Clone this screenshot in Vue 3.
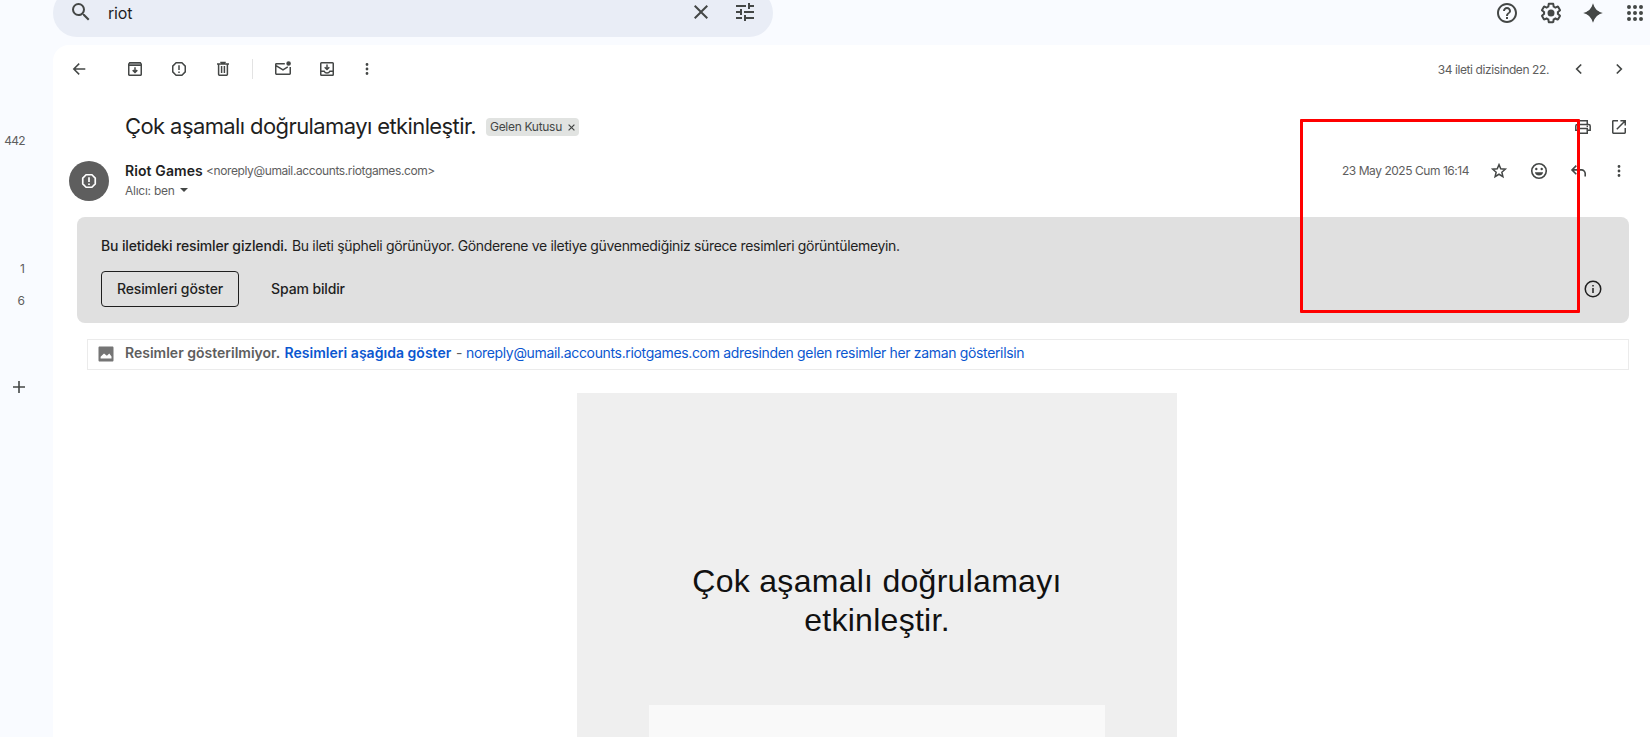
<script setup>
import { h } from 'vue'

const glyphs = {
  search: { f: 'M15.5 14h-.79l-.28-.27A6.47 6.47 0 0 0 16 9.5 6.5 6.5 0 1 0 9.5 16c1.61 0 3.09-.59 4.23-1.57l.27.28v.79l5 4.99L20.49 19zm-6 0C7.01 14 5 11.99 5 9.5S7.01 5 9.5 5 14 7.01 14 9.5 11.99 14 9.5 14z' },
  clear: { f: 'M19 6.41 17.59 5 12 10.59 6.41 5 5 6.41 10.59 12 5 17.59 6.41 19 12 13.41 17.59 19 19 17.59 13.41 12z' },
  tune: { f: 'M3 17v2h6v-2H3zM3 5v2h10V5H3zm10 16v-2h8v-2h-8v-2h-2v6h2zM7 9v2H3v2h4v2h2V9H7zm14 4v-2H11v2h10zm-6-4h2V7h4V5h-4V3h-2v6z' },
  help: { f: 'M11 18h2v-2h-2v2zm1-16C6.48 2 2 6.48 2 12s4.48 10 10 10 10-4.48 10-10S17.52 2 12 2zm0 18c-4.41 0-8-3.59-8-8s3.59-8 8-8 8 3.59 8 8-3.59 8-8 8zm0-14c-2.21 0-4 1.79-4 4h2c0-1.1.9-2 2-2s2 .9 2 2c0 2-3 1.75-3 5h2c0-2.25 3-2.5 3-5 0-2.21-1.79-4-4-4z' },
  gear: { f: 'M13.85 22.25h-3.7c-.74 0-1.36-.54-1.45-1.27l-.27-1.89c-.27-.14-.53-.29-.79-.46l-1.8.72c-.7.26-1.47-.03-1.81-.65L2.2 15.53c-.35-.66-.2-1.44.36-1.88l1.53-1.19c-.01-.15-.02-.3-.02-.46 0-.15.01-.31.02-.46l-1.52-1.19c-.59-.45-.74-1.26-.37-1.88l1.85-3.19c.34-.62 1.11-.9 1.79-.63l1.81.73c.26-.17.52-.32.78-.46l.27-1.91c.09-.7.71-1.25 1.44-1.25h3.7c.74 0 1.36.54 1.45 1.27l.27 1.89c.27.14.53.29.79.46l1.8-.72c.71-.26 1.48.03 1.82.65l1.84 3.18c.36.66.2 1.44-.36 1.88l-1.52 1.19c.01.15.02.3.02.46s-.01.31-.02.46l1.52 1.19c.56.45.72 1.23.37 1.86l-1.86 3.22c-.34.62-1.11.9-1.8.63l-1.8-.72c-.26.17-.52.32-.78.46l-.27 1.91c-.1.68-.72 1.22-1.46 1.22zm-3.23-2h2.76l.37-2.55.53-.22c.44-.18.88-.44 1.34-.78l.45-.34 2.38.96 1.38-2.4-2.03-1.58.07-.56c.03-.26.06-.51.06-.78s-.03-.53-.06-.78l-.07-.56 2.03-1.58-1.39-2.4-2.39.96-.45-.35c-.42-.32-.87-.58-1.33-.77l-.52-.22-.37-2.55h-2.76l-.37 2.55-.53.21c-.44.19-.88.44-1.34.79l-.45.33-2.38-.95-1.39 2.39 2.03 1.58-.07.56a7 7 0 0 0-.06.79c0 .26.02.53.06.78l.07.56-2.03 1.58 1.38 2.4 2.39-.96.45.35c.43.33.86.58 1.33.77l.53.22.38 2.55zM12 8.5a3.5 3.5 0 1 1 0 7 3.5 3.5 0 0 1 0-7z' },
  spark: { f: 'M12 2.2Q13.9 10.1 21.8 12 13.9 13.9 12 21.8 10.1 13.9 2.2 12 10.1 10.1 12 2.2z', s: 'M12 5Q13.4 10.6 19 12 13.4 13.4 12 19 10.6 13.4 5 12 10.6 10.6 12 5z' },
  apps: { f: [6, 12, 18].flatMap(y => [6, 12, 18].map(x => `M${x - 2} ${y}a2 2 0 1 1 4 0a2 2 0 1 1-4 0z`)).join('') },
  back: { s: 'M16.3 10H5M10.2 4.6 4.8 10l5.4 5.4' },
  archive: { s: 'M3.75 5.2 4.7 3.75h10.6l.95 1.45v10.1a.9.9 0 0 1-.9.95H4.65a.9.9 0 0 1-.9-.95zM3.75 6.2h12.5M10 8.2v5M7.7 11.1l2.3 2.3 2.3-2.3', g: 'M4.5 4h11v2h-11z' },
  report: { s: 'M7.1 3.75h5.8l3.35 3.35v5.8l-3.35 3.35H7.1L3.75 12.9V7.1zM10 6.2v4.9M10 12.4v1.6' },
  trash: { s: 'M4 4.9h12M8 4V3.5h4V4M5.6 5v10.5a.8.8 0 0 0 .8.75h7.2a.8.8 0 0 0 .8-.75V5M8.6 7v7M11.4 7v7' },
  unread: { s: 'M11.8 4.75H3.4a.65.65 0 0 0-.65.65v9.2c0 .36.3.65.65.65h13.2c.36 0 .65-.3.65-.65V8M3 6.6l7 4.2 4.8-2.9', f: 'M13.3 4.5a2.3 2.3 0 1 1 4.6 0a2.3 2.3 0 1 1-4.6 0z' },
  move: { s: 'M4.5 3.75h11c.4 0 .75.35.75.75v11c0 .4-.35.75-.75.75h-11a.75.75 0 0 1-.75-.75v-11c0-.4.35-.75.75-.75zM3.75 12.25h3.4c.5 1.1 1.6 1.8 2.85 1.8s2.35-.7 2.85-1.8h3.4M10 5.6v4.6M7.7 8.2l2.3 2.3 2.3-2.3' },
  more: { f: [5.5, 10, 14.5].map(y => `M8.6 ${y}a1.4 1.4 0 1 1 2.8 0a1.4 1.4 0 1 1-2.8 0z`).join('') },
  prev: { s: 'M12.2 5.5 7.7 10l4.5 4.5' },
  next: { s: 'M7.8 5.5l4.5 4.5-4.5 4.5' },
  print: { s: 'M5.75 7V3.75h8.5V7M5.8 13.2h-3V9c0-.9.7-1.6 1.6-1.6h11.2c.9 0 1.6.7 1.6 1.6v4.2h-3M5.75 11.4h8.5v4.85h-8.5z', f: 'M13.6 8.6h1.4v1.4h-1.4z' },
  open: { s: 'M9 3.75H4.4a.65.65 0 0 0-.65.65v11.2c0 .36.3.65.65.65h11.2c.36 0 .65-.3.65-.65V11M11.4 3.75h4.85V8.6M16 4 7.8 12.2' },
  star: { s: 'M10 3.6l1.75 4.2 4.55.4-3.45 3 1.05 4.45L10 13.25 6.1 15.65l1.05-4.45-3.45-3 4.55-.4z' },
  smile: { s: 'M2.75 10a7.25 7.25 0 1 1 14.5 0a7.25 7.25 0 1 1-14.5 0z', f: 'M6.1 8a1.2 1.2 0 1 1 2.4 0a1.2 1.2 0 1 1-2.4 0zM11.5 8a1.2 1.2 0 1 1 2.4 0a1.2 1.2 0 1 1-2.4 0zM5.9 11.2h8.2a4.2 4.2 0 0 1-8.2 0z' },
  reply: { s: 'M7.3 4.6 3 8.9l4.3 4.3M3.4 8.9h9.1a3.7 3.7 0 0 1 3.7 3.7v3' },
  info: { s: 'M2.25 10a7.75 7.75 0 1 1 15.5 0a7.75 7.75 0 1 1-15.5 0zM10 9v5M10 6v1.6' },
  plus: { s: 'M10 4v12M4 10h12' },
  image: { f: 'M3.5 2.5h13c.5 0 1 .5 1 1v13c0 .5-.5 1-1 1h-13c-.5 0-1-.5-1-1v-13c0-.5.5-1 1-1zM4.6 14.6h10.9V12.4l-2.2-3-2.4 2.4L8 9.4 4.6 12.8z' },
}

// s: stroked outline, f: filled shape, g: translucent fill
const Glyph = (p) => {
  const g = glyphs[p.name]
  const size = p.size || 20
  return h('svg', { width: size, height: size, viewBox: `0 0 ${size} ${size}`, fill: 'currentColor' }, [
    g.g && h('path', { d: g.g, opacity: 0.45 }),
    g.f && h('path', { d: g.f, 'fill-rule': 'evenodd' }),
    g.s && h('path', { d: g.s, fill: 'none', stroke: 'currentColor', 'stroke-width': p.weight || 1.5 }),
  ])
}
Glyph.props = ['name', 'size', 'weight']

const tools = ['archive', 'report', 'trash']
</script>

<template>
  <div class="app">
    <header class="top">
      <div class="search">
        <Glyph name="search" :size="24" />
        <span class="query t">riot</span>
        <Glyph name="clear" :size="24" />
        <Glyph name="tune" :size="24" />
      </div>
      <nav class="shortcuts">
        <Glyph name="help" :size="24" />
        <Glyph name="gear" :size="24" />
        <Glyph name="spark" :size="24" />
        <Glyph name="apps" :size="24" />
      </nav>
    </header>

    <div class="body">
      <aside class="side">
        <span class="count">442</span>
        <span class="count second">1</span>
        <span class="count">6</span>
        <Glyph class="add" name="plus" weight="1.6" />
      </aside>

      <main class="panel">
        <div class="toolbar">
          <Glyph class="back" name="back" />
          <Glyph v-for="t in tools" :key="t" :name="t" />
          <i class="divider"></i>
          <Glyph name="unread" />
          <Glyph name="move" />
          <Glyph class="kebab" name="more" />
          <span class="pager t">34 ileti dizisinden 22.</span>
          <Glyph class="prev" name="prev" weight="1.7" />
          <Glyph name="next" weight="1.7" />
        </div>

        <div class="subject">
          <h1 class="t">Çok aşamalı doğrulamayı etkinleştir.</h1>
          <span class="label"><span class="t">Gelen Kutusu</span>
            <svg width="7" height="7" viewBox="0 0 7 7"><path d="M.6.6l5.8 5.8M6.4.6.6 6.4" stroke="#444746" stroke-width="1.2" /></svg>
          </span>
          <span class="actions">
            <Glyph name="print" />
            <Glyph name="open" />
          </span>
        </div>

        <div class="sender">
          <div class="avatar"><Glyph name="report" weight="1.7" /></div>
          <div class="who">
            <div class="line"><b class="t">Riot Games</b><span class="mail t">&lt;noreply@umail.accounts.riotgames.com&gt;</span></div>
            <div class="line"><span class="to t">Alıcı: ben</span><i class="caret"></i></div>
          </div>
          <div class="meta">
            <span class="date t">23 May 2025 Cum 16:14</span>
            <Glyph name="star" />
            <Glyph name="smile" weight="1.6" />
            <Glyph name="reply" weight="1.6" />
            <Glyph name="more" />
          </div>
        </div>

        <section class="warning">
          <p><b class="t">Bu iletideki resimler gizlendi.</b><span class="warntext t">Bu ileti şüpheli görünüyor. Gönderene ve iletiye güvenmediğiniz sürece resimleri görüntülemeyin.</span></p>
          <div class="choices">
            <button class="outlined"><span class="t">Resimleri göster</span></button>
            <button><span class="t">Spam bildir</span></button>
            <Glyph class="info" name="info" />
          </div>
        </section>

        <div class="images">
          <Glyph name="image" />
          <b class="off t">Resimler gösterilmiyor.</b>
          <b class="show t">Resimleri aşağıda göster</b>
          <span class="dash">-</span>
          <span class="always t">noreply@umail.accounts.riotgames.com adresinden gelen resimler her zaman gösterilsin</span>
        </div>

        <article class="mailbody">
          <h2><span class="t">Çok aşamalı doğrulamayı</span><br><span class="t">etkinleştir.</span></h2>
          <div class="card"></div>
        </article>
      </main>
    </div>
    <div class="mark"></div>
  </div>
</template>

<style>
html, body { margin: 0; overflow: hidden; }
</style>

<style scoped>
.app { position: relative; width: 1650px; height: 737px; overflow: hidden; display: flex; flex-direction: column; background: #f9fbff; color: #444746; font-family: Inter, "Open Sans", sans-serif; font-size: 14px; }
svg { display: block; flex: none; }
.t { white-space: nowrap; }
.top { display: flex; flex: none; justify-content: space-between; align-items: center; height: 48px; margin: -11px 3px 8px 53px; }
.search { display: flex; align-items: center; box-sizing: border-box; width: 720px; height: 48px; padding: 0 16px 2px; border-radius: 24px; background: #e9edf6; }
.query { margin-left: 15px; margin-right: auto; padding-top: 1px; color: #1f1f1f; font-size: 16px; letter-spacing: -.2px; }
.search svg + svg { margin-left: 20px; }
.shortcuts { display: flex; gap: 20px; }
.shortcuts svg:nth-child(n+3) { margin-left: -2px; }
.body { display: flex; flex: 1; min-height: 0; }
.side { display: flex; flex-direction: column; flex: none; box-sizing: border-box; width: 53px; padding: 80px 28px 0 0; align-items: flex-end; }
.count { height: 32px; line-height: 32px; font-size: 12px; letter-spacing: -.7px; color: #5e5e5e; }
.second { margin-top: 96px; }
.second, .second + .count { letter-spacing: 0; }
.add { margin: 60px -4px 0 0; }
.panel { display: flex; flex-direction: column; flex: 1; min-width: 0; overflow: hidden; background: #fff; border-radius: 16px 0 0 0; }
.toolbar { display: flex; flex: none; align-items: center; height: 48px; padding: 0 21px 0 16px; gap: 24px; }
.back { margin-right: 12px; }
.divider { width: 1px; height: 20px; margin: 0 -4px 0 -5px; background: #e3e3e3; }
.kebab { margin-left: -4px; }
.pager { margin-left: auto; margin-right: -4px; font-size: 12px; letter-spacing: -.4px; color: #5e5e5e; }
.prev { margin-right: -4px; }
.subject { display: flex; flex: none; align-items: center; height: 68px; padding: 0 21px 0 72px; }
h1 { margin: 0; width: 361px; padding-bottom: 2px; font-size: 22px; font-weight: 400; letter-spacing: -.6px; line-height: 28px; color: #1f1f1f; }
.label { display: flex; box-sizing: border-box; align-items: center; justify-content: space-between; width: 93px; height: 18px; padding: 0 4px; border-radius: 4px; background: #e1e3e1; font-size: 12px; letter-spacing: -.3px; line-height: 16px; }
.actions { display: flex; gap: 16px; margin-left: auto; }
.sender { display: flex; flex: none; height: 56px; padding: 0 21px 0 16px; }
.avatar { display: grid; place-items: center; width: 40px; height: 40px; border-radius: 50%; background: #5e5e5e; color: #fff; }
.who { margin: -1px 0 0 16px; }
.line { display: flex; align-items: center; height: 20px; }
.line b { width: 81px; font-weight: 600; letter-spacing: .1px; color: #1f1f1f; }
.mail, .to, .date { font-size: 12px; color: #5e5e5e; letter-spacing: -.39px; }
.to { letter-spacing: -.25px; }
.date { letter-spacing: -.46px; margin-top: -2px; }
.caret { margin-left: 5px; border: 4px solid transparent; border-top-color: #444746; border-bottom: 0; }
.meta { display: flex; align-items: center; gap: 20px; height: 20px; margin-left: auto; }
.warning { flex: none; box-sizing: border-box; height: 106px; margin: 0 21px 0 24px; padding: 19px 24px 0; border-radius: 8px; background: #e0e0e0; color: #1f1f1f; }
.warning p { display: flex; height: 20px; margin: 0 0 15px; line-height: 20px; }
.warning b { width: 191px; font-weight: 500; letter-spacing: -.15px; }
.warntext { letter-spacing: -.335px; }
.choices { display: flex; align-items: center; }
button { display: flex; align-items: center; justify-content: center; box-sizing: border-box; height: 36px; width: 138px; padding: 0 0 2px; border: 0; background: none; font: 500 14px Inter, sans-serif; letter-spacing: -.13px; color: #1f1f1f; }
.outlined { border: 1px solid #1f1f1f; border-radius: 4px; }
.info { margin-left: auto; margin-right: 2px; }
.images { display: flex; flex: none; align-items: center; box-sizing: border-box; height: 31px; margin: 16px 21px 0 34px; padding: 0 8px; border: 1px solid #ebebeb; color: #5e5e5e; line-height: 18px; }
.images svg { color: #757575; margin: -1px 0 0 -.5px; }
.images b, .images span { margin-top: -3px; }
.images b { font-weight: 600; }
.off { margin-left: 9.5px; width: 159.5px; }
.show { width: 171.5px; color: #0b57d0; letter-spacing: .03px; }
.dash { width: 10px; }
.always { color: #0b57d0; letter-spacing: -.34px; }
.mailbody { flex: none; box-sizing: border-box; width: 600px; margin: 23px 0 0 524px; padding-top: 169px; background: #efefef; }
h2 { margin: 0; font: 400 32px/39px "Liberation Sans", Arial, sans-serif; letter-spacing: .28px; text-align: center; color: #111; }
.card { height: 100px; width: 456px; margin: 65px auto 0; background: #f9f9f9; }
.mark { position: absolute; left: 1300px; top: 119px; width: 274px; height: 188px; border: 3px solid #f00; border-radius: 1px; }
</style>
